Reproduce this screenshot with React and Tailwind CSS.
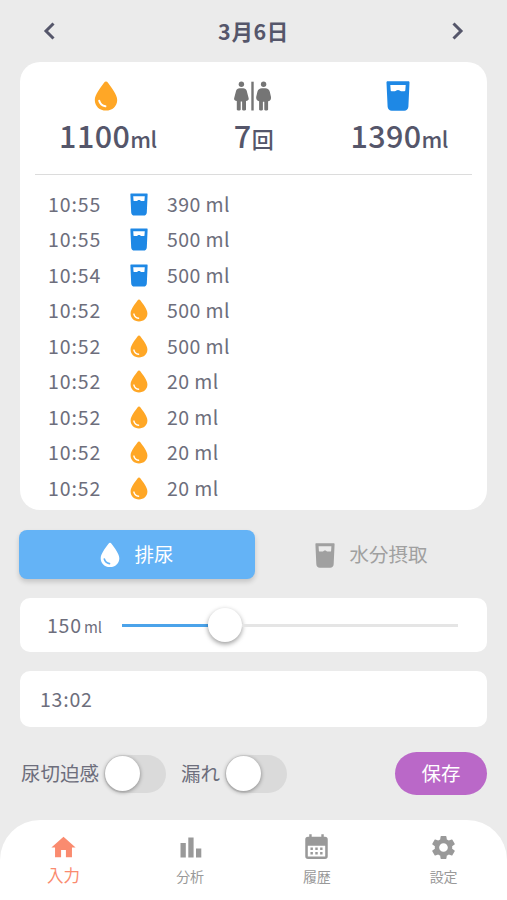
import { useState } from 'react';
import { MdHome, MdSettings } from 'react-icons/md';

const records = [
  { time: '10:55', type: 'drink', amount: 390 },
  { time: '10:55', type: 'drink', amount: 500 },
  { time: '10:54', type: 'drink', amount: 500 },
  { time: '10:52', type: 'urine', amount: 500 },
  { time: '10:52', type: 'urine', amount: 500 },
  { time: '10:52', type: 'urine', amount: 20 },
  { time: '10:52', type: 'urine', amount: 20 },
  { time: '10:52', type: 'urine', amount: 20 },
  { time: '10:52', type: 'urine', amount: 20 },
];

function DropIcon({ className }) {
  return (
    <svg viewBox="0 0 24 30" className={className}>
      <path
        d="M12 .4c-.8 0-1.400.5-2 1.300C6.500 6.500.8 13.500.8 18.900.8 25.100 5.600 29.500 12 29.500s11.200-4.400 11.200-10.600c0-5.400-5.700-12.400-9.200-17.200-.6-.8-1.200-1.300-2-1.300z"
        fill="currentColor"
      />
      <path d="M5.200 19.800c.8 3 3 5 6.200 5.500" fill="none" className="stroke-[var(--shine)]" strokeWidth="2" strokeLinecap="round" />
    </svg>
  );
}

function GlassIcon({ className }) {
  return (
    <svg viewBox="0 0 24 30" className={className}>
      <path
        fillRule="evenodd"
        d="M1.600.3h20.800c.8 0 1.200.6 1.100 1.400l-1.100 23.800c-.1 2.500-1.800 4.200-4.200 4.200H5.800c-2.400 0-4.100-1.700-4.200-4.200L.5 1.700C.4.900.8.300 1.600.3zM4.300 4l.4 5.600c.1.500.4.700.9.700h3.200c.7 0 1-.3 1.500-.7 1-.7 2.400-.7 3.400 0 .5.400.8.700 1.500.7h3.200c.5 0 .8-.2.9-.7l.4-5.600z"
        fill="currentColor"
      />
    </svg>
  );
}

function RestroomIcon({ className }) {
  return (
    <svg viewBox="0 0 37 30" className={className} fill="currentColor">
      <circle cx="7.400" cy="3.200" r="2.700" />
      <path d="M5.600 7.200h3.600c1.800 0 3 .9 3.500 2.600l1.900 7.200c.5 1.900-.7 3-2.600 3v8.400c0 1.400-3.900 1.400-3.900 0V20.500H6.700v7.900c0 1.400-3.900 1.400-3.900 0V20C.9 20-.3 18.900.2 17l1.900-7.200c.5-1.700 1.700-2.600 3.500-2.600z" />
      <rect x="17.300" y=".7" width="2.400" height="28.800" />
      <circle cx="29.600" cy="3.200" r="2.700" />
      <path d="M28 7.200h3.200c2.500 0 4 1.300 4.600 3.500l1.100 4.900c.5 2.400-.6 4.300-2.800 4.600v8.200c0 1.400-3.800 1.400-3.800 0v-7.600h-1.400v7.600c0 1.400-3.800 1.400-3.800 0v-8.200c-2.200-.3-3.300-2.200-2.800-4.600l1.100-4.900c.6-2.200 2.100-3.500 4.600-3.500z" />
    </svg>
  );
}

function ChartIcon({ className }) {
  return (
    <svg viewBox="0 0 29 29" className={className} fill="currentColor">
      <path d="M4.500 10h5.300v14.500H4.500zM12.300 4.500h5.300v20h-5.300zM20 15.500h5.300v9H20z" />
    </svg>
  );
}

function CalendarIcon({ className }) {
  return (
    <svg viewBox="0 0 24 24" className={className} fill="currentColor">
      <path d="M9 12v2H7v-2h2m4 0v2h-2v-2h2m4 0v2h-2v-2h2m2-9a2.300 2.300 0 0 1 2.300 2.300v14a2.300 2.300 0 0 1-2.300 2.300H5a2.300 2.300 0 0 1-2.300-2.300v-14A2.300 2.300 0 0 1 5 3h1V1h2v2h8V1h2v2h1m.2 16.500v-9H4.800v9h14.400M9 15.800v2H7v-2h2m4 0v2h-2v-2h2m4 0v2h-2v-2h2Z" />
    </svg>
  );
}

function Chevron({ flip }) {
  return (
    <svg viewBox="0 0 12 18" className={flip ? 'h-[18px] w-3 rotate-180' : 'h-[18px] w-3'}>
      <path d="M10.500 1.500 3 9l7.500 7.500" fill="none" stroke="#55566a" strokeWidth="3" />
    </svg>
  );
}

function Total({ icon, value, unit }) {
  return (
    <div className="flex flex-1 flex-col items-center">
      <div className="mr-[3px] flex h-[30px] items-center">{icon}</div>
      <div className="mt-1 flex h-10 items-baseline font-medium text-[#55566a]">
        <span className="text-[30.5px] leading-10 tracking-[0.4px]">{value}</span>
        <span className="text-[22px] leading-10 tracking-[-0.5px]">{unit}</span>
      </div>
    </div>
  );
}

function Toggle({ label, checked, onChange }) {
  return (
    <label className="flex items-center">
      <span className="pb-px text-[19.5px] text-[#6d6e7c]">{label}</span>
      <button
        type="button"
        role="switch"
        aria-checked={checked}
        onClick={() => onChange(!checked)}
        className={`ml-[5px] flex h-[38px] w-[62px] items-center rounded-full bg-[#dadada] px-px ${checked ? 'justify-end' : ''}`}
      >
        <span className="size-[35px] rounded-full bg-white shadow-[0_1px_4px_rgba(0,0,0,0.4)]" />
      </button>
    </label>
  );
}

function NavItem({ icon, label, active }) {
  return (
    <a className={`flex flex-1 flex-col items-center ${active ? 'text-[#fa8b6f]' : 'text-[#999999]'}`}>
      {icon}
      <span className={active ? 'text-[16.5px] leading-[26px]' : 'text-[14px] leading-[29px]'}>{label}</span>
    </a>
  );
}

export default function App() {
  const [amount] = useState(150);
  const [urgency, setUrgency] = useState(false);
  const [leak, setLeak] = useState(false);

  return (
    <div className="flex h-[900px] w-[507px] flex-col overflow-hidden bg-[#ebebeb] font-['Noto_Sans_CJK_JP',sans-serif]">
      <header className="flex h-[62px] shrink-0 items-center justify-between px-[43px]">
        <Chevron />
        <h1 className="text-[21.5px] font-bold tracking-[0.6px] text-[#55566a]">3月6日</h1>
        <Chevron flip />
      </header>

      <section className="mx-5 h-[448px] shrink-0 overflow-hidden rounded-[20px] bg-white px-[15px]">
        <div className="flex h-[113px] border-b border-[#dcdcdc] pt-[19px]">
          <Total icon={<DropIcon className="h-[30px] w-6 text-[#ffa726] [--shine:#fff]" />} value="1100" unit="ml" />
          <Total icon={<RestroomIcon className="h-[30px] w-[37px] text-[#757575]" />} value="7" unit="回" />
          <Total icon={<GlassIcon className="h-[30px] w-6 text-[#1e88e5]" />} value="1390" unit="ml" />
        </div>
        <ul className="pt-[10.5px]">
          {records.map((r, i) => (
            <li key={i} className="flex h-[35.5px] items-center pl-[13px] text-[19.5px] text-[#6d6e7c]">
              <span className="w-[82px] tracking-[0.9px]">{r.time}</span>
              {r.type === 'drink' ? (
                <GlassIcon className="mt-0.5 h-[23px] w-[18px] text-[#1e88e5]" />
              ) : (
                <DropIcon className="mt-0.5 h-[23px] w-[18px] text-[#ffa726] [--shine:#fff]" />
              )}
              <span className="ml-[19px] tracking-[0.4px]">{r.amount} ml</span>
            </li>
          ))}
        </ul>
      </section>

      <div className="mx-[19px] mt-5 flex h-[49px] shrink-0 text-[19.5px]">
        <button className="flex w-[236px] items-center justify-center gap-[14px] rounded-lg bg-[#64b3f6] pb-px text-white shadow-[0_3px_5px_rgba(0,0,0,0.16)]">
          <DropIcon className="mt-0.5 h-[26px] w-5 [--shine:#64b3f6]" />
          排尿
        </button>
        <button className="flex flex-1 items-center justify-center gap-[14px] pb-px text-[#a0a0a0]">
          <GlassIcon className="mt-0.5 h-[25px] w-5" />
          水分摂取
        </button>
      </div>

      <div className="mx-5 mt-[19px] flex h-[54px] shrink-0 items-center rounded-[10px] bg-white text-[#6d6e7c]">
        <span className="ml-[27px] flex w-[75px] items-baseline">
          <span className="text-[19.5px] tracking-[0.8px]">{amount}</span>
          <span className="ml-0.5 text-[15px]">ml</span>
        </span>
        <div className="flex w-[336px] items-center">
          <div className="h-[3px] w-[86px] bg-[#4ba3ea]" />
          <div className="size-[34px] rounded-full bg-white shadow-[0_2px_5px_rgba(0,0,0,0.4)]" />
          <div className="h-[3px] flex-1 bg-[#e5e5e5]" />
        </div>
      </div>

      <div className="mx-5 mt-[19px] flex h-[56px] shrink-0 items-center rounded-[10px] bg-white pb-px pl-5 text-[19.5px] tracking-[0.8px] text-[#6d6e7c]">
        13:02
      </div>

      <div className="mx-5 mt-[25px] flex h-[43px] shrink-0 items-center pl-px">
        <Toggle label="尿切迫感" checked={urgency} onChange={setUrgency} />
        <div className="ml-[15px]">
          <Toggle label="漏れ" checked={leak} onChange={setLeak} />
        </div>
        <button className="ml-auto h-[43px] w-[92px] rounded-full bg-[#ba68c8] pb-0.5 text-[19.5px] text-white">保存</button>
      </div>

      <nav className="mt-[25px] flex flex-1 rounded-t-[40px] bg-white pt-[13px]">
        <NavItem active label="入力" icon={<MdHome className="size-[29px]" />} />
        <NavItem label="分析" icon={<ChartIcon className="size-[29px]" />} />
        <NavItem label="履歴" icon={<CalendarIcon className="size-[29px]" />} />
        <NavItem label="設定" icon={<MdSettings className="size-[29px]" />} />
      </nav>
    </div>
  );
}
